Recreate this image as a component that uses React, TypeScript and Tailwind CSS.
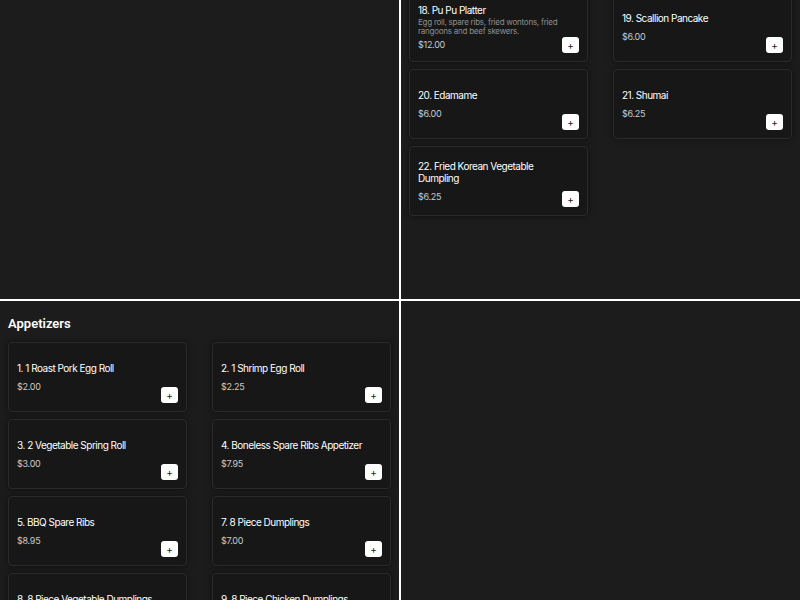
import React from "react";

type MenuItem = {
  id: string;
  name: string;
  description?: string;
  price: string;
};

const appetizers: MenuItem[] = [
  { id: "1", name: "1. 1 Roast Pork Egg Roll", price: "$2.00" },
  { id: "2", name: "2. 1 Shrimp Egg Roll", price: "$2.25" },
  { id: "3", name: "3. 2 Vegetable Spring Roll", price: "$3.00" },
  { id: "4", name: "4. Boneless Spare Ribs Appetizer", price: "$7.95" },
  { id: "5", name: "5. BBQ Spare Ribs", price: "$8.95" },
  { id: "7", name: "7. 8 Piece Dumplings", price: "$7.00" },
  { id: "8", name: "8. 8 Piece Vegetable Dumplings", price: "$7.00" },
  { id: "9", name: "9. 8 Piece Chicken Dumplings", price: "$7.00" },
];

const moreAppetizers: MenuItem[] = [
  {
    id: "18",
    name: "18. Pu Pu Platter",
    description: "Egg roll, spare ribs, fried wontons, fried rangoons and beef skewers.",
    price: "$12.00",
  },
  { id: "19", name: "19. Scallion Pancake", price: "$6.00" },
  { id: "20", name: "20. Edamame", price: "$6.00" },
  { id: "21", name: "21. Shumai", price: "$6.25" },
  { id: "22", name: "22. Fried Korean Vegetable Dumpling", price: "$6.25" },
];

function ItemCard({ item }: { item: MenuItem }) {
  return (
    <div className="flex min-h-[70px] items-center justify-between rounded-[4px] border border-[#2a2a2a] bg-[#171717] px-2 py-2 shadow-[0_0_6px_rgba(0,0,0,0.45)]">
      <div className="min-w-0 flex-1">
        <p className="text-[10px] leading-[12px] tracking-[-0.05em] text-white">{item.name}</p>
        {item.description ? (
          <p className="mt-[2px] text-[8px] leading-[9px] tracking-[-0.03em] text-[#8e8e8e]">{item.description}</p>
        ) : null}
        <p className={`${item.description ? "mt-[3px]" : "mt-[7px]"} text-[9px] leading-[11px] tracking-[-0.03em] text-[#cacaca]`}>
          {item.price}
        </p>
      </div>
      <button
        type="button"
        className="flex h-[16px] w-[17px] shrink-0 items-center justify-center self-end rounded-[3px] bg-white text-[10px] leading-none text-[#222]"
      >
        +
      </button>
    </div>
  );
}

function ItemGrid({ items }: { items: MenuItem[] }) {
  return (
    <div className="grid grid-cols-2 gap-x-[25px] gap-y-[7px]">
      {items.map((item) => (
        <ItemCard key={item.id} item={item} />
      ))}
    </div>
  );
}

export default function App() {
  return (
    <div
      className="grid h-[600px] w-[800px] grid-cols-[399px_399px] grid-rows-[299px_299px] gap-[2px] bg-white"
      style={{ fontFamily: "Inter, 'Noto Sans', sans-serif" }}
    >
      <div className="bg-[#1c1c1c]" />

      <div className="overflow-hidden bg-[#1c1c1c] px-2">
        <div className="-mt-2">
          <ItemGrid items={moreAppetizers} />
        </div>
      </div>

      <div className="overflow-hidden bg-[#1c1c1c] px-2 pt-[13px]">
        <h2 className="mb-2 text-[13px] leading-[20px] font-semibold text-white" style={{ fontFamily: "Roboto, sans-serif" }}>
          Appetizers
        </h2>
        <ItemGrid items={appetizers} />
      </div>

      <div className="bg-[#1c1c1c]" />
    </div>
  );
}
